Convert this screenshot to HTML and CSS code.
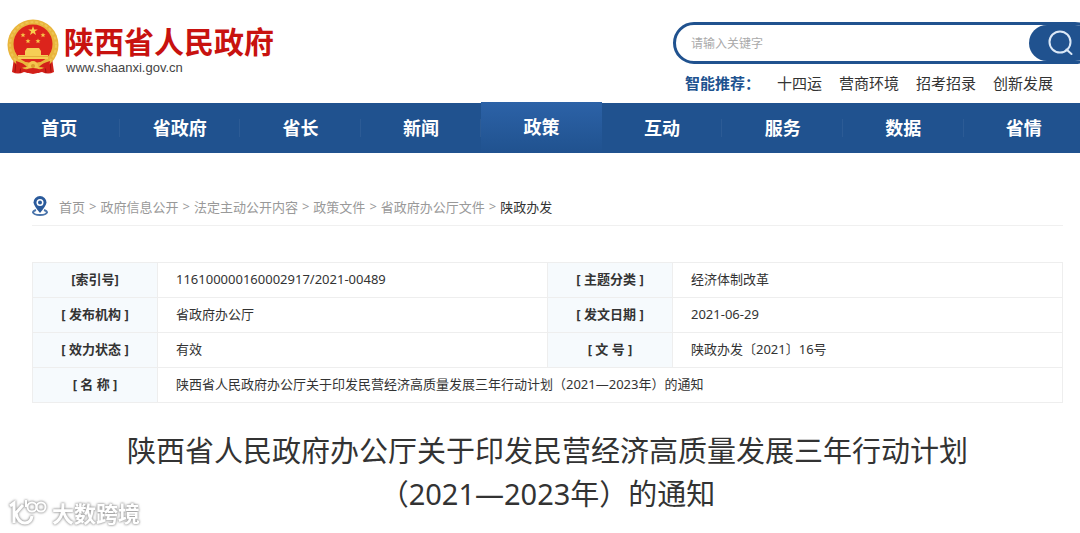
FILE: index.html
```html
<!DOCTYPE html>
<html lang="zh-CN">
<head>
    <meta charset="UTF-8">
    <meta name="viewport" content="width=device-width, initial-scale=1.0">
    <title>陕西省人民政府办公厅关于印发民营经济高质量发展三年行动计划（2021—2023年）的通知</title>
    <link rel="stylesheet" href="styles.css">
</head>
<body>

<header class="header">
    <a class="logo" href="#">
        <svg class="emblem" viewBox="0 0 52 56" aria-hidden="true">
            <path d="M7 39 L5 53 Q11 56 17 53 L26 55 L35 53 Q41 56 47 53 L45 39 Z" fill="#d3201a"/>
            <path d="M9 43 L8 53 M14 46 L13 54 M43 43 L44 53 M38 46 L39 54" stroke="#a3120e" stroke-width="1" fill="none"/>
            <circle cx="26" cy="26" r="25.5" fill="#e9b53c"/>
            <circle cx="26" cy="26" r="23" fill="none" stroke="#efc453" stroke-width="2" stroke-dasharray="3 2"/>
            <circle cx="26" cy="25" r="19.5" fill="#dc241c"/>
            <path d="M26 7 L27.2 10.4 L30.8 10.4 L27.9 12.5 L29 16 L26 13.9 L23 16 L24.1 12.5 L21.2 10.4 L24.8 10.4 Z" fill="#f8d04e"/>
            <g fill="#f8c648">
                <path id="star" d="M16 13.5 L16.7 15.3 L18.5 15.3 L17.1 16.5 L17.6 18.3 L16 17.2 L14.4 18.3 L14.9 16.5 L13.5 15.3 L15.3 15.3 Z"/>
                <use href="#star" x="20"/>
                <use href="#star" x="5" y="6"/>
                <use href="#star" x="15" y="6"/>
            </g>
            <path d="M20 29 h12 l2 3 h-16 Z M18 32 h16 v4 h7 v4 H11 v-4 h7 Z" fill="#f6cd55"/>
            <path d="M11 37.5 H41" stroke="#e5ae3c" stroke-width="1"/>
            <path d="M9 41 Q26 47 43 41 L39 46 Q26 52 13 46 Z" fill="#e9b53c"/>
            <path d="M9 42 Q17 44 20 48 Q14 48 10 52 Z M43 42 Q35 44 32 48 Q38 48 42 52 Z" fill="#d3201a"/>
            <circle cx="26" cy="47" r="5" fill="#f3c64e"/>
            <circle cx="26" cy="47" r="2" fill="#d99a2b"/>
            <path d="M18 51 Q26 47 34 51 L32 54 Q26 52 20 54 Z" fill="#d3201a"/>
        </svg>
        <span class="logo-text">
            <span class="logo-name">陕西省人民政府</span>
            <span class="logo-url">www.shaanxi.gov.cn</span>
        </span>
    </a>

    <div class="search-area">
        <form class="search">
            <input type="text" class="search-input" placeholder="请输入关键字" aria-label="请输入关键字">
            <button type="submit" class="search-btn" aria-label="搜索">
                <svg width="26" height="26" viewBox="0 0 26 26" fill="none" stroke="#dbe8f7" stroke-width="2" stroke-linecap="round">
                    <circle cx="12" cy="12" r="10.5"/>
                    <path d="M18.5 19.5 L23.5 24"/>
                </svg>
            </button>
        </form>
        <div class="recommend">
            <strong>智能推荐：</strong>
            <a href="#">十四运</a>
            <a href="#">营商环境</a>
            <a href="#">招考招录</a>
            <a href="#">创新发展</a>
        </div>
    </div>
</header>

<nav class="nav">
    <ul class="nav-list">
        <li><a href="#">首页</a></li>
        <li><a href="#">省政府</a></li>
        <li><a href="#">省长</a></li>
        <li><a href="#">新闻</a></li>
        <li class="active"><a href="#">政策</a></li>
        <li><a href="#">互动</a></li>
        <li><a href="#">服务</a></li>
        <li><a href="#">数据</a></li>
        <li><a href="#">省情</a></li>
    </ul>
</nav>

<main class="container">
    <!-- 当前位置 -->
    <div class="breadcrumb">
        <svg class="pin" width="16" height="20" viewBox="0 0 16 20" aria-hidden="true">
            <path d="M4 14 Q1 15 1 16.5 Q2 19 8 19 Q14 19 15 16.5 Q15 15 12 14" fill="none" stroke="#4a74ab" stroke-width="2"/>
            <path d="M8 0 A6.5 6.5 0 0 1 14.5 6.5 Q14 10 8 17 Q2 10 1.5 6.5 A6.5 6.5 0 0 1 8 0 Z" fill="#2a5a9b"/>
            <circle cx="8" cy="6.5" r="3.5" fill="#fff"/>
            <circle cx="8" cy="6.5" r="2" fill="#2a5a9b"/>
        </svg>
        <a href="#">首页</a><span>&gt;</span>
        <a href="#">政府信息公开</a><span>&gt;</span>
        <a href="#">法定主动公开内容</a><span>&gt;</span>
        <a href="#">政策文件</a><span>&gt;</span>
        <a href="#">省政府办公厅文件</a><span>&gt;</span>
        <a href="#" class="current">陕政办发</a>
    </div>

    <!-- 文件信息 -->
    <table class="info">
        <tr>
            <th scope="row">[索引号]</th>
            <td>116100000160002917/2021-00489</td>
            <th scope="row">[ 主题分类 ]</th>
            <td>经济体制改革</td>
        </tr>
        <tr>
            <th scope="row">[ 发布机构 ]</th>
            <td>省政府办公厅</td>
            <th scope="row">[ 发文日期 ]</th>
            <td>2021-06-29</td>
        </tr>
        <tr>
            <th scope="row">[ 效力状态 ]</th>
            <td>有效</td>
            <th scope="row">[ 文 号 ]</th>
            <td>陕政办发〔2021〕16号</td>
        </tr>
        <tr>
            <th scope="row">[ 名 称 ]</th>
            <td colspan="3">陕西省人民政府办公厅关于印发民营经济高质量发展三年行动计划（2021—2023年）的通知</td>
        </tr>
    </table>

    <h1 class="title">陕西省人民政府办公厅关于印发民营经济高质量发展三年行动计划<br>（2021—2023年）的通知</h1>
</main>

<div class="watermark">
    <svg width="40" height="28" viewBox="0 0 40 28" fill="none" stroke="#fff" stroke-width="3" aria-hidden="true">
        <path d="M2 7 L6 4 V24 M15 6 L8 14 Q10 24 17 24 Q23 24 24 17"/>
        <path d="M18 1 V8" stroke-width="2"/>
        <circle cx="24" cy="8" r="4.5" stroke-width="2"/>
        <circle cx="33" cy="8" r="4.5" stroke-width="2"/>
    </svg>
    <span>大数跨境</span>
</div>

</body>
</html>
```
FILE: styles.css
```css
* {
    box-sizing: border-box;
}
body {
    margin: 0;
    background-color: #fff;
    color: #333;
    font-family: "Noto Sans", "Noto Sans CJK SC", sans-serif;
    font-size: 13px;
    overflow-x: hidden;
}
a {
    color: inherit;
    text-decoration: none;
}

/* 头部 */
.header {
    display: flex;
    justify-content: space-between;
    height: 103px;
    overflow: hidden;
}
.logo {
    display: flex;
    gap: 5px;
    padding: 19px 0 0 7px;
}
.emblem {
    width: 52px;
    height: 56px;
}
.logo-text {
    display: flex;
    flex-direction: column;
    padding-top: 6px;
}
.logo-name {
    color: #c8120f;
    font-size: 30px;
    font-weight: bold;
    line-height: 34px;
}
.logo-url {
    padding-left: 2px;
    color: #444;
    font-family: "Liberation Sans", Arial, sans-serif;
    font-size: 13px;
    line-height: 18px;
}
.search-area {
    width: 407px;
    padding-top: 22px;
}
.search {
    display: flex;
    height: 42px;
    margin-right: -16px;
    border: 3px solid #20528f;
    border-radius: 21px;
}
.search-input {
    flex: 1;
    min-width: 0;
    padding: 0 15px;
    border: none;
    outline: none;
    background: none;
    font-family: inherit;
    font-size: 12px;
}
.search-input::placeholder {
    color: #aaa;
}
.search-btn {
    display: flex;
    align-items: center;
    justify-content: center;
    width: 64px;
    padding: 0;
    border: none;
    border-radius: 18px;
    background-color: #20528f;
    cursor: pointer;
}
.recommend {
    display: flex;
    gap: 17px;
    padding: 8px 0 0 12px;
    font-size: 15px;
    line-height: 22px;
    white-space: nowrap;
}
.recommend strong {
    color: #20528f;
}

/* 导航 */
.nav {
    height: 50px;
    background-color: #20528f;
}
.nav-list {
    display: flex;
    margin: 0 -4px 0 -1px;
    padding: 0;
    list-style: none;
}
.nav-list li {
    flex: 1;
    height: 50px;
    background: linear-gradient(#2c5b95, #2c5b95) right center / 1px 18px no-repeat;
}
.nav-list a {
    display: block;
    color: #fff;
    font-size: 18px;
    font-weight: bold;
    line-height: 50px;
    text-align: center;
}
.nav-list .active {
    height: 51px;
    margin-top: -1px;
    background: linear-gradient(#2c62a7, #20528f);
}

/* 内容 */
.container {
    padding: 36px 17px 0 32px;
}
.breadcrumb {
    display: flex;
    align-items: center;
    height: 37px;
    padding-bottom: 2px;
    border-bottom: 1px solid #f0f0f0;
    color: #999;
    white-space: nowrap;
}
.breadcrumb .pin {
    margin-right: 11px;
}
.breadcrumb span {
    margin: 0 4px;
}
.breadcrumb .current {
    color: #333;
}
.info {
    width: 100%;
    margin-top: 36px;
    border-collapse: collapse;
    table-layout: fixed;
}
.info th,
.info td {
    height: 35px;
    padding: 0 18px 2px;
    border: 1px solid #eee;
    line-height: 20px;
    text-align: left;
}
.info th {
    width: 125px;
    padding: 0 0 2px;
    background-color: #f6fafd;
    text-align: center;
}
.title {
    margin: 26px 0 0;
    font-size: 29px;
    font-weight: normal;
    line-height: 43px;
    text-align: center;
}

/* 水印 */
.watermark {
    position: absolute;
    left: 8px;
    bottom: 4px;
    display: flex;
    align-items: center;
    gap: 4px;
    color: #fff;
    font-size: 22px;
    font-weight: bold;
    line-height: 32px;
    filter: drop-shadow(0 0 1px #999) drop-shadow(0 0 1px #bbb);
}
```
